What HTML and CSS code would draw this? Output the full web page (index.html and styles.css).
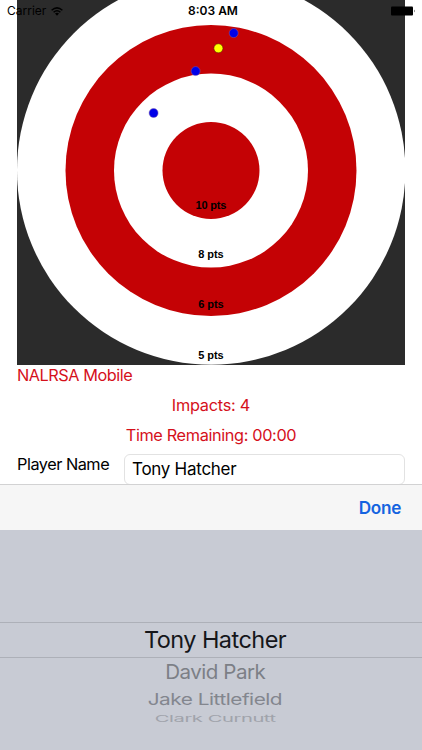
FILE: index.html
```html
<!DOCTYPE html>
<html lang="en">
<head>
<meta charset="utf-8">
<meta name="viewport" content="width=device-width, initial-scale=1">
<title>NALRSA Mobile</title>
<link rel="stylesheet" href="styles.css">
</head>
<body>
<div class="status-bar">
  <div class="carrier">Carrier
    <svg class="wifi" viewBox="0 0 12 9" width="12" height="9"><g fill="none" stroke="#000" stroke-width="1.5"><path d="M.6 3.2Q6-1.4 11.4 3.2"/><path d="M2.6 5.2Q6 2.2 9.4 5.2"/></g><path d="M4 6.6Q6 5 8 6.6L6 8.8Z"/></svg>
  </div>
  <div class="clock">8:03 AM</div>
  <svg class="battery" viewBox="0 0 25 10" width="25" height="10"><rect x="0" y="0.5" width="22" height="9" rx="1"/><path d="M23 3.5q1.3 1.5 0 3z"/></svg>
</div>
<main class="screen">
  <svg class="target" viewBox="17 0 388.4 364.8" preserveAspectRatio="none">
    <rect x="17" y="0" width="389" height="365" fill="#2b2b2b"/>
    <circle cx="211.2" cy="170.5" r="194.2" fill="#fff"/>
    <circle cx="211" cy="170.5" r="145.5" fill="#c40205"/>
    <circle cx="211" cy="170.5" r="97" fill="#fff"/>
    <circle cx="211" cy="170.5" r="48.5" fill="#c40205"/>
    <g class="points">
      <text x="211" y="208.6" textLength="31">10 pts</text>
      <text x="211" y="258.3" textLength="25.5">8 pts</text>
      <text x="211" y="308" textLength="25.5">6 pts</text>
      <text x="211" y="359" textLength="25.5">5 pts</text>
    </g>
    <g class="impacts">
      <circle cx="233.7" cy="33.1" r="4.5"/>
      <circle cx="195.6" cy="71.1" r="4.5"/>
      <circle cx="153.6" cy="113" r="4.5"/>
      <circle class="latest" cx="218.4" cy="48.3" r="4.5"/>
    </g>
  </svg>
  <p class="info title"><span class="name">NALRSA Mobile</span></p>
  <p class="info"><span class="count">Impacts: 4</span></p>
  <p class="info"><span class="time">Time Remaining: 00:00</span></p>
  <div class="player">
    <label for="player">Player Name</label>
    <div class="field" id="player"><span>Tony Hatcher</span></div>
  </div>
</main>
<div class="toolbar"><span class="done">Done</span></div>
<div class="picker">
  <div class="row selected"><span>Tony Hatcher</span></div>
  <div class="row next"><span>David Park</span></div>
  <div class="row second"><span>Jake Littlefield</span></div>
  <div class="row third"><span>Clark Curnutt</span></div>
</div>
</body>
</html>
```
FILE: styles.css
```css
* { box-sizing: border-box; }
body {
  margin: 0;
  width: 422px;
  height: 750px;
  overflow: hidden;
  position: relative;
  background: #fff;
  color: #000;
  font-family: Inter, Roboto, sans-serif;
}
.status-bar {
  position: absolute;
  inset: 0 0 auto;
  height: 22px;
  padding: 0 6px 0 7px;
  display: grid;
  grid-template-columns: 1fr auto 1fr;
  align-items: center;
  font-size: 12px;
  line-height: 22px;
}
.carrier { display: flex; align-items: center; gap: 5px; letter-spacing: 0; }
.clock { font-weight: 600; letter-spacing: 0; padding-left: 3px; }
.battery { justify-self: end; }
.screen { height: 484px; }
.target { display: block; width: 388.4px; height: 364.8px; margin-left: 17px; }
.points { font: bold 11px "Liberation Sans", sans-serif; text-anchor: middle; }
.impacts { fill: #0000e8; stroke: #8060a8; stroke-width: 0.5; }
.impacts .latest { fill: #ff0; stroke: #402000; }
.info {
  margin: 0 17px;
  height: 30px;
  line-height: 20px;
  font-size: 16.3px;
  text-align: center;
  color: #d5101b;
  white-space: nowrap;
}
.title { text-align: left; }
.name { letter-spacing: -0.47px; }
.count { letter-spacing: -0.25px; }
.time { letter-spacing: -0.36px; }
.player { display: flex; margin: -1px 17px 0; height: 31px; font-size: 16.3px; line-height: 21px; }
.player label { width: 107px; flex: none; letter-spacing: -0.48px; }
.field {
  flex: 1;
  padding-left: 7px;
  border: 1px solid #e2e2e2;
  border-radius: 6px;
  font-size: 17px;
  line-height: 29px;
  letter-spacing: -0.27px;
}
.toolbar {
  position: relative;
  height: 46px;
  padding-right: 21px;
  border-top: 1px solid #d2d2d3;
  background: #f6f6f6;
  text-align: right;
  line-height: 45px;
  font-size: 17.2px;
  font-weight: 600;
  color: #1463e0;
}
.done { letter-spacing: -0.3px; }
.picker { height: 220px; padding-top: 92px; background: #c8cbd4; text-align: center; overflow: hidden; }
.row { white-space: nowrap; font-size: 23.5px; color: #15161a; padding-left: 8px; }
.row span { display: inline-block; letter-spacing: -0.55px; }
.selected { height: 36px; line-height: 34px; border: solid #adb0b8; border-width: 1px 0; }
.next { height: 28px; line-height: 28px; color: #7c7f86; }
.next span { transform: scale(0.875, 0.85); }
.second { height: 28px; line-height: 28px; color: #83868e; }
.second span { transform: scale(0.885, 0.67); }
.third { height: 10px; line-height: 10px; color: #a0a3ab; }
.third span { transform: scale(0.86, 0.4); }
```
